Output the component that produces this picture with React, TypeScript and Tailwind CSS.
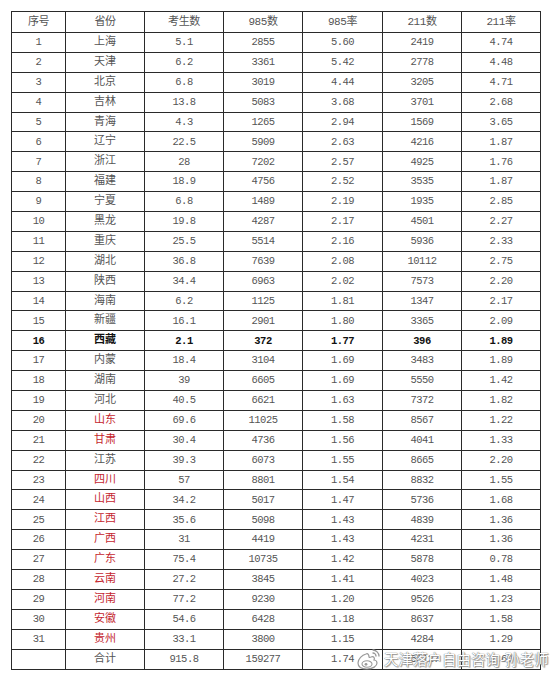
type Row = [string, string, string, string, string, string, string];

const rows: Row[] = [
  ["1", "上海", "5.1", "2855", "5.60", "2419", "4.74"],
  ["2", "天津", "6.2", "3361", "5.42", "2778", "4.48"],
  ["3", "北京", "6.8", "3019", "4.44", "3205", "4.71"],
  ["4", "吉林", "13.8", "5083", "3.68", "3701", "2.68"],
  ["5", "青海", "4.3", "1265", "2.94", "1569", "3.65"],
  ["6", "辽宁", "22.5", "5909", "2.63", "4216", "1.87"],
  ["7", "浙江", "28", "7202", "2.57", "4925", "1.76"],
  ["8", "福建", "18.9", "4756", "2.52", "3535", "1.87"],
  ["9", "宁夏", "6.8", "1489", "2.19", "1935", "2.85"],
  ["10", "黑龙", "19.8", "4287", "2.17", "4501", "2.27"],
  ["11", "重庆", "25.5", "5514", "2.16", "5936", "2.33"],
  ["12", "湖北", "36.8", "7639", "2.08", "10112", "2.75"],
  ["13", "陕西", "34.4", "6963", "2.02", "7573", "2.20"],
  ["14", "海南", "6.2", "1125", "1.81", "1347", "2.17"],
  ["15", "新疆", "16.1", "2901", "1.80", "3365", "2.09"],
  ["16", "西藏", "2.1", "372", "1.77", "396", "1.89"],
  ["17", "内蒙", "18.4", "3104", "1.69", "3483", "1.89"],
  ["18", "湖南", "39", "6605", "1.69", "5550", "1.42"],
  ["19", "河北", "40.5", "6621", "1.63", "7372", "1.82"],
  ["20", "山东", "69.6", "11025", "1.58", "8567", "1.22"],
  ["21", "甘肃", "30.4", "4736", "1.56", "4041", "1.33"],
  ["22", "江苏", "39.3", "6073", "1.55", "8665", "2.20"],
  ["23", "四川", "57", "8801", "1.54", "8832", "1.55"],
  ["24", "山西", "34.2", "5017", "1.47", "5736", "1.68"],
  ["25", "江西", "35.6", "5098", "1.43", "4839", "1.36"],
  ["26", "广西", "31", "4419", "1.43", "4231", "1.36"],
  ["27", "广东", "75.4", "10735", "1.42", "5878", "0.78"],
  ["28", "云南", "27.2", "3845", "1.41", "4023", "1.48"],
  ["29", "河南", "77.2", "9230", "1.20", "9526", "1.23"],
  ["30", "安徽", "54.6", "6428", "1.18", "8637", "1.58"],
  ["31", "贵州", "33.1", "3800", "1.15", "4284", "1.29"],
  ["", "合计", "915.8", "159277", "1.74", "155127", "1.69"],
];

const red = new Set(["20", "21", "23", "24", "25", "26", "27", "28", "29", "30", "31"]);
const headers = ["序号", "省份", "考生数", "985数", "985率", "211数", "211率"];
const widths = ["w-[54px]", "w-[79px]", "w-[79px]", "w-[79px]", "w-[80px]", "w-[79px]", "w-[79px]"];

const font = { fontFamily: '"Liberation Mono", "Noto Sans CJK SC", monospace' };

function WeiboIcon() {
  return (
    <svg width="26" height="22" viewBox="0 0 26 22" fill="none">
      <path
        d="M10 6c-4 1-8 5-8 9 0 4 4 6 9 6 6 0 10-3 10-6 0-2-2-3-3-3 1-2 0-4-3-3-1 0-1 1-2 0 0-2-1-4-3-3z"
        fill="white"
        stroke="#9a9a9a"
        strokeWidth="1.2"
      />
      <ellipse cx="11" cy="16" rx="5" ry="3.2" stroke="#9a9a9a" strokeWidth="1.1" fill="white" />
      <circle cx="10" cy="16.3" r="1.4" fill="#9a9a9a" />
      <path d="M17 2c3 0 6 3 6 6" stroke="#9a9a9a" strokeWidth="1.3" strokeLinecap="round" />
      <path d="M17 5c1.5 0 3 1.5 3 3" stroke="#9a9a9a" strokeWidth="1.3" strokeLinecap="round" />
    </svg>
  );
}

export default function App() {
  return (
    <div className="relative w-[550px] h-[680px] bg-white overflow-hidden" style={font}>
      <div className="pt-[11px] pl-[11px]">
        <table className="border-collapse table-fixed w-[529px] border border-[#222]">
          <thead>
            <tr className="h-[21px]">
              {headers.map((h, i) => (
                <th
                  key={i}
                  className={`${widths[i]} border border-[#2a2a2a] p-0 text-center align-middle font-normal text-[11px] text-[#555] tracking-[-0.4px]`}
                >
                  {h}
                </th>
              ))}
            </tr>
          </thead>
          <tbody>
            {rows.map((r) => {
              const bold = r[0] === "16";
              const isRed = red.has(r[0]);
              return (
                <tr key={r[1]} className="h-[19.9px]">
                  {r.map((c, i) => (
                    <td
                      key={i}
                      className={`border border-[#2a2a2a] p-0 text-center align-middle leading-none ${
                        i === 1 ? "text-[11px]" : "text-[10.5px] tracking-[-0.5px]"
                      } ${
                        bold
                          ? "font-bold text-[#111]"
                          : i === 1 && isRed
                          ? "text-[#c4262e]"
                          : "text-[#555]"
                      }`}
                    >
                      {c}
                    </td>
                  ))}
                </tr>
              );
            })}
          </tbody>
        </table>
      </div>

      <div className="absolute left-[356px] top-[648px] flex items-center gap-[2px] whitespace-nowrap">
        <WeiboIcon />
        <span
          className="text-[14.5px] text-white leading-none"
          style={{
            fontFamily: '"Noto Sans CJK SC", sans-serif',
            textShadow: "0 0 1px #777, 0 0 1px #777, 1px 1px 1px #999",
          }}
        >
          天津落户自由咨询-孙老师
        </span>
      </div>
    </div>
  );
}
